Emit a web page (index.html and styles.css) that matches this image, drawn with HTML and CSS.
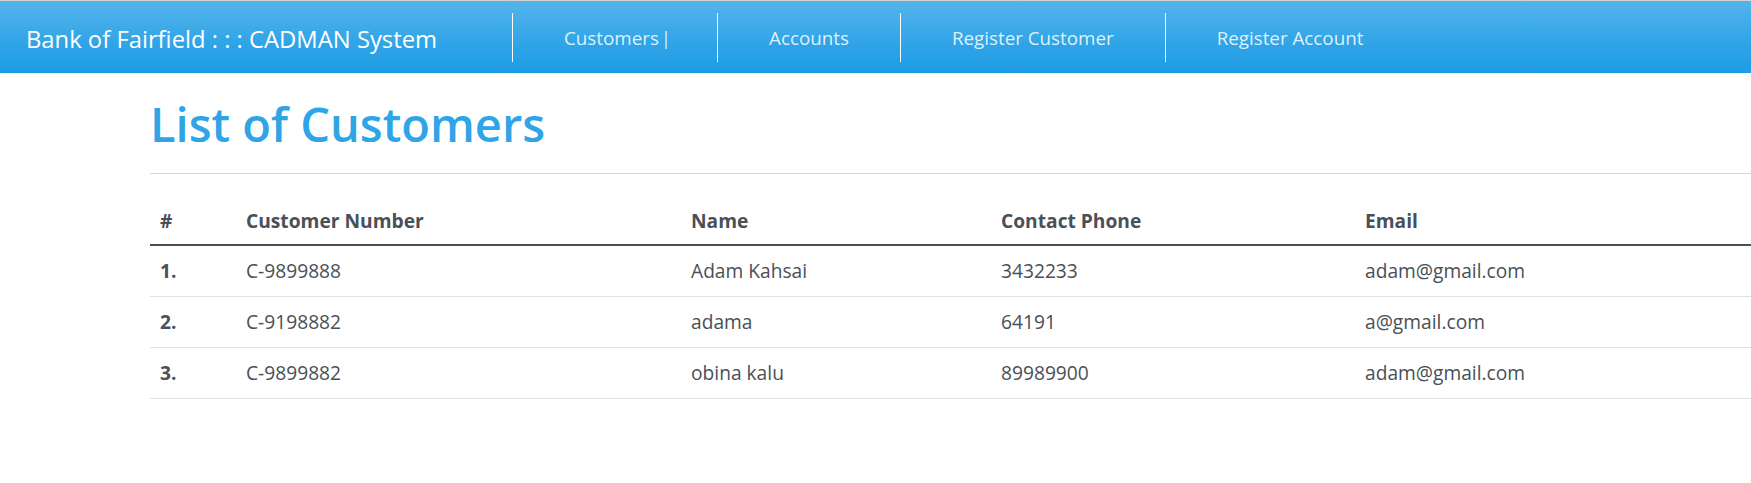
FILE: index.html
```html
<!DOCTYPE html>
<html lang="en">
<head>
<meta charset="utf-8">
<title>List of Customers</title>
<link rel="stylesheet" href="styles.css">
</head>
<body>
<header class="navbar">
  <a class="brand" href="#">Bank of Fairfield : : : CADMAN System</a>
  <ul class="nav">
    <li class="nav-item"><a class="nav-link nav-link-tight" href="#">Customers |</a></li>
    <li class="nav-item"><a class="nav-link" href="#">Accounts</a></li>
    <li class="nav-item"><a class="nav-link" href="#">Register Customer</a></li>
    <li class="nav-item"><a class="nav-link" href="#">Register Account</a></li>
  </ul>
</header>
<main class="container">
  <h1 class="page-title">List of Customers</h1>
  <hr class="divider">
  <table class="table">
    <colgroup>
      <col class="c-num">
      <col class="c-cust">
      <col class="c-name">
      <col class="c-phone">
      <col>
    </colgroup>
    <thead>
      <tr><th>#</th><th>Customer Number</th><th>Name</th><th>Contact Phone</th><th>Email</th></tr>
    </thead>
    <tbody>
      <tr><th>1.</th><td>C-9899888</td><td>Adam Kahsai</td><td>3432233</td><td>adam@gmail.com</td></tr>
      <tr><th>2.</th><td>C-9198882</td><td>adama</td><td>64191</td><td>a@gmail.com</td></tr>
      <tr><th>3.</th><td>C-9899882</td><td>obina kalu</td><td>89989900</td><td>adam@gmail.com</td></tr>
    </tbody>
  </table>
</main>
</body>
</html>
```

FILE: styles.css
```css
* { box-sizing: border-box; }

html, body {
  margin: 0;
  padding: 0;
  background: #fff;
  overflow-x: hidden;
}

body {
  font-family: "Open Sans", "Noto Sans", "DejaVu Sans", sans-serif;
  font-size: 19.2px;
  line-height: 1.5;
  color: #495057;
}

/* ---------- navbar ---------- */
.navbar {
  display: flex;
  align-items: flex-start;
  height: 73px;
  border-top: 1px solid #d3d3d3;
  background-image: linear-gradient(#54b4eb, #2fa4e7 60%, #1d9ce5);
  background-color: #2fa4e7;
}

.brand {
  width: 512px;
  padding: 24px 0 0 26px;
  font-size: 23.8px;
  line-height: 29px;
  color: #fff;
  text-decoration: none;
  white-space: nowrap;
}

.nav {
  display: flex;
  margin: 12px 0 0;
  padding: 0;
  list-style: none;
}

.nav-item {
  border-left: 1px solid #fff;
}

.nav-link {
  display: block;
  padding: 1px 51px 0;
  line-height: 48px;
  font-size: 18.8px;
  color: rgba(255, 255, 255, 0.85);
  text-decoration: none;
  white-space: nowrap;
}

.nav-link-tight {
  padding-right: 46px;
  word-spacing: -3px;
}

/* ---------- content ---------- */
.container {
  margin-left: 150px;
}

.page-title {
  margin: 20px 0 0;
  font-size: 47px;
  font-weight: 600;
  line-height: 62px;
  color: #2fa4e7;
}

.divider {
  margin: 18px 0 19px;
  border: 0;
  border-top: 1px solid #d6d6d6;
}

.table {
  width: 100%;
  table-layout: fixed;
  border-collapse: collapse;
}

.c-num { width: 86px; }
.c-cust { width: 445px; }
.c-name { width: 310px; }
.c-phone { width: 364px; }

.table th,
.table td {
  padding: 11px 10px 10.3px;
  text-align: left;
  line-height: 28.8px;
  vertical-align: top;
  border-bottom: 1px solid #dee2e6;
  white-space: nowrap;
}

.table th {
  font-weight: 700;
}

.table thead th {
  padding-top: 13.5px;
  padding-bottom: 8.7px;
  border-bottom: 2px solid #495057;
}
```
